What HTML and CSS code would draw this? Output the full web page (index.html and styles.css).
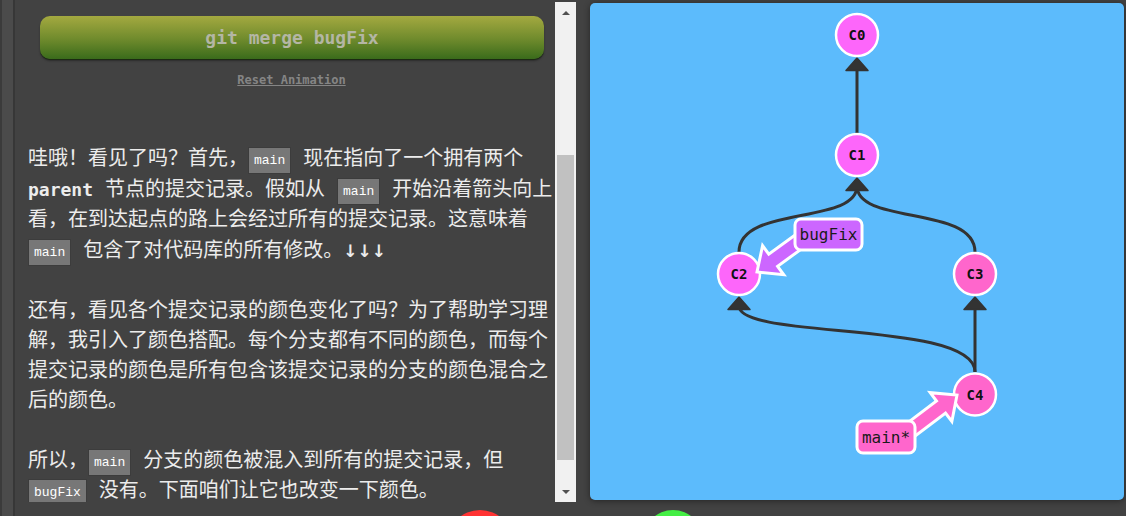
FILE: index.html
```html
<!DOCTYPE html>
<html lang="zh-CN">
<head>
<meta charset="utf-8">
<title>Learn Git Branching</title>
<link rel="stylesheet" href="styles.css">
</head>
<body>
<div class="app">
  <div class="edge"></div>
  <section class="instructions">
    <div class="content">
      <div class="cmd-btn">git merge bugFix</div>
      <div class="reset"><a href="#">Reset Animation</a></div>
      <div class="text">
        <p>哇哦！看见了吗？首先，<code>main</code> 现在指向了一个拥有两个 <strong>parent</strong> 节点的提交记录。假如从 <code>main</code> 开始沿着箭头向上看，在到达起点的路上会经过所有的提交记录。这意味着 <code>main</code> 包含了对代码库的所有修改。<span class="arrows">↓↓↓</span></p>
        <p>还有，看见各个提交记录的颜色变化了吗？为了帮助学习理解，我引入了颜色搭配。每个分支都有不同的颜色，而每个提交记录的颜色是所有包含该提交记录的分支的颜色混合之后的颜色。</p>
        <p>所以，<code>main</code> 分支的颜色被混入到所有的提交记录，但 <code>bugFix</code> 没有。下面咱们让它也改变一下颜色。</p>
      </div>
    </div>
    <div class="scrollbar">
      <div class="sb-up"></div>
      <div class="sb-track"><div class="sb-thumb"></div></div>
      <div class="sb-down"></div>
    </div>
  </section>
  <main class="canvas">
    <svg class="graph" viewBox="590 3 534 497" width="534" height="497">
      <g class="edges">
        <line x1="857" y1="133" x2="857" y2="68"/>
        <path d="M739,252 C739,205 857,225 857,186"/>
        <path d="M975,252 C975,205 857,225 857,186"/>
        <path d="M975,372 C975,320 739,340 739,306"/>
        <line x1="975" y1="372" x2="975" y2="306"/>
      </g>
      <g class="heads">
        <path d="M846,70.5 L857,58 L868,70.5 Z"/>
        <path d="M846,190.5 L857,178 L868,190.5 Z"/>
        <path d="M728,309.5 L739,297 L750,309.5 Z"/>
        <path d="M964,309.5 L975,297 L986,309.5 Z"/>
      </g>
      <g class="nodes">
        <circle class="mix" cx="857" cy="35" r="21"/>
        <circle class="mix" cx="857" cy="155" r="21"/>
        <circle class="mix" cx="739" cy="274" r="21"/>
        <circle class="pink" cx="975" cy="274" r="21"/>
        <circle class="pink" cx="975" cy="394.5" r="21"/>
        <text x="857" y="40">C0</text>
        <text x="857" y="160">C1</text>
        <text x="739" y="279">C2</text>
        <text x="975" y="279">C3</text>
        <text x="975" y="399.5">C4</text>
      </g>
      <g class="branch">
        <polygon class="purple" points="797.88,232.95 768.76,254.15 762.58,245.66 757,272 783.78,274.78 777.6,266.29 806.72,245.09"/>
        <rect class="purple" x="795" y="219" width="67" height="31" rx="6"/>
        <text x="828.5" y="240">bugFix</text>
      </g>
      <g class="branch">
        <polygon class="pink" points="904.54,425.13 936.5,401.05 930.18,392.66 957,395 951.86,421.42 945.54,413.03 913.58,437.11"/>
        <rect class="pink" x="857" y="421" width="58" height="32" rx="6"/>
        <text x="886" y="442.5">main*</text>
      </g>
    </svg>
  </main>
</div>
<div class="dock">
  <div class="dot dot-red"></div>
  <div class="dot dot-green"></div>
</div>
</body>
</html>
```
FILE: styles.css
```css
html, body {
  margin: 0;
  padding: 0;
  overflow: hidden;
}
body {
  width: 1126px;
  height: 516px;
  background: #424242;
  position: relative;
  font-family: "Liberation Mono", "Noto Sans CJK SC", monospace;
}
.app {
  display: flex;
  height: 516px;
}
.edge {
  width: 11px;
  flex: none;
  background: #4b4b4b;
  border-left: 2px solid #3b3b3b;
  border-right: 2px solid #373737;
}
.instructions {
  display: flex;
  width: 561px;
  flex: none;
  height: 500px;
  margin-top: 2px;
}
.content {
  width: 527px;
  padding: 14px 0 0 13px;
  overflow: hidden;
}
.cmd-btn {
  margin: 0 11px 0 12px;
  height: 43px;
  box-sizing: border-box;
  border-radius: 10px;
  background: linear-gradient(#a4a940, #6e8a2c 55%, #3a6b1b);
  box-shadow: 0 1px 0 #1c2a12, 0 2px 2px rgba(0, 0, 0, 0.35);
  color: #b4b6a4;
  font-family: "DejaVu Sans Mono", "Liberation Mono", monospace;
  font-size: 18px;
  font-weight: bold;
  line-height: 43px;
  text-align: center;
}
.reset {
  margin-top: 12px;
  height: 18px;
  line-height: 18px;
  text-align: center;
}
.reset a {
  color: #858585;
  font-family: "DejaVu Sans Mono", monospace;
  font-size: 12px;
  font-weight: bold;
  text-decoration: underline;
}
.text {
  margin-top: 56px;
  color: #ececec;
  font-size: 20px;
  line-height: 30px;
}
.text p {
  margin: 0 0 30px;
}
.text strong {
  font-family: "DejaVu Sans Mono", monospace;
  font-size: 18px;
  font-weight: bold;
}
.text .arrows {
  font-family: "DejaVu Sans", sans-serif;
  font-weight: bold;
  font-size: 17px;
}
.text code {
  display: inline-block;
  font-family: "Liberation Mono", monospace;
  font-size: 13px;
  line-height: 25px;
  padding: 0 5px;
  background: #777777;
  border: 1px solid #3c3c3c;
  color: #ffffff;
  vertical-align: 1px;
}
.scrollbar {
  width: 21px;
  flex: none;
  display: flex;
  flex-direction: column;
  background: #f1f1f1;
}
.sb-up, .sb-down {
  height: 21px;
  display: flex;
  align-items: center;
  justify-content: center;
}
.sb-up::before {
  content: "";
  border-left: 4px solid transparent;
  border-right: 4px solid transparent;
  border-bottom: 4px solid #505050;
}
.sb-down::before {
  content: "";
  border-left: 4px solid transparent;
  border-right: 4px solid transparent;
  border-top: 4px solid #505050;
}
.sb-track {
  flex: 1;
  padding: 132px 2px 20px;
}
.sb-thumb {
  height: 305px;
  background: #c1c1c1;
}
.canvas {
  width: 534px;
  height: 497px;
  flex: none;
  margin: 3px 0 0 14px;
  background: #5cbbfc;
  border-radius: 5px;
  box-shadow: 0 1px 6px rgba(0, 0, 0, 0.45);
  overflow: hidden;
}
.graph {
  display: block;
}
.edges line, .edges path {
  fill: none;
  stroke: #333333;
  stroke-width: 3;
}
.heads path {
  fill: #333333;
  stroke: #333333;
  stroke-width: 1.5;
  stroke-linejoin: round;
}
.nodes circle {
  stroke: #ffffff;
  stroke-width: 2.5;
}
.nodes .mix {
  fill: #fd66fa;
}
.nodes .pink {
  fill: #ff66cc;
}
.nodes text {
  font-family: "DejaVu Sans Mono", monospace;
  font-weight: bold;
  font-size: 14px;
  text-anchor: middle;
  fill: #111111;
}
.branch polygon, .branch rect {
  stroke: #ffffff;
  stroke-width: 3;
  stroke-linejoin: miter;
}
.branch .purple {
  fill: #cc66ff;
}
.branch .pink {
  fill: #ff66cc;
}
.branch text {
  font-family: "DejaVu Sans Mono", monospace;
  font-size: 16px;
  text-anchor: middle;
  fill: #1b1b1b;
}
.dock {
  position: absolute;
  left: 0;
  bottom: 0;
  width: 1126px;
  height: 6px;
  overflow: hidden;
}
.dot {
  position: absolute;
  top: 0;
  border-radius: 50%;
}
.dot-red {
  left: 447px;
  width: 66px;
  height: 66px;
  background: #ff3333;
}
.dot-green {
  left: 643px;
  width: 60px;
  height: 60px;
  background: #44ee44;
}
```
